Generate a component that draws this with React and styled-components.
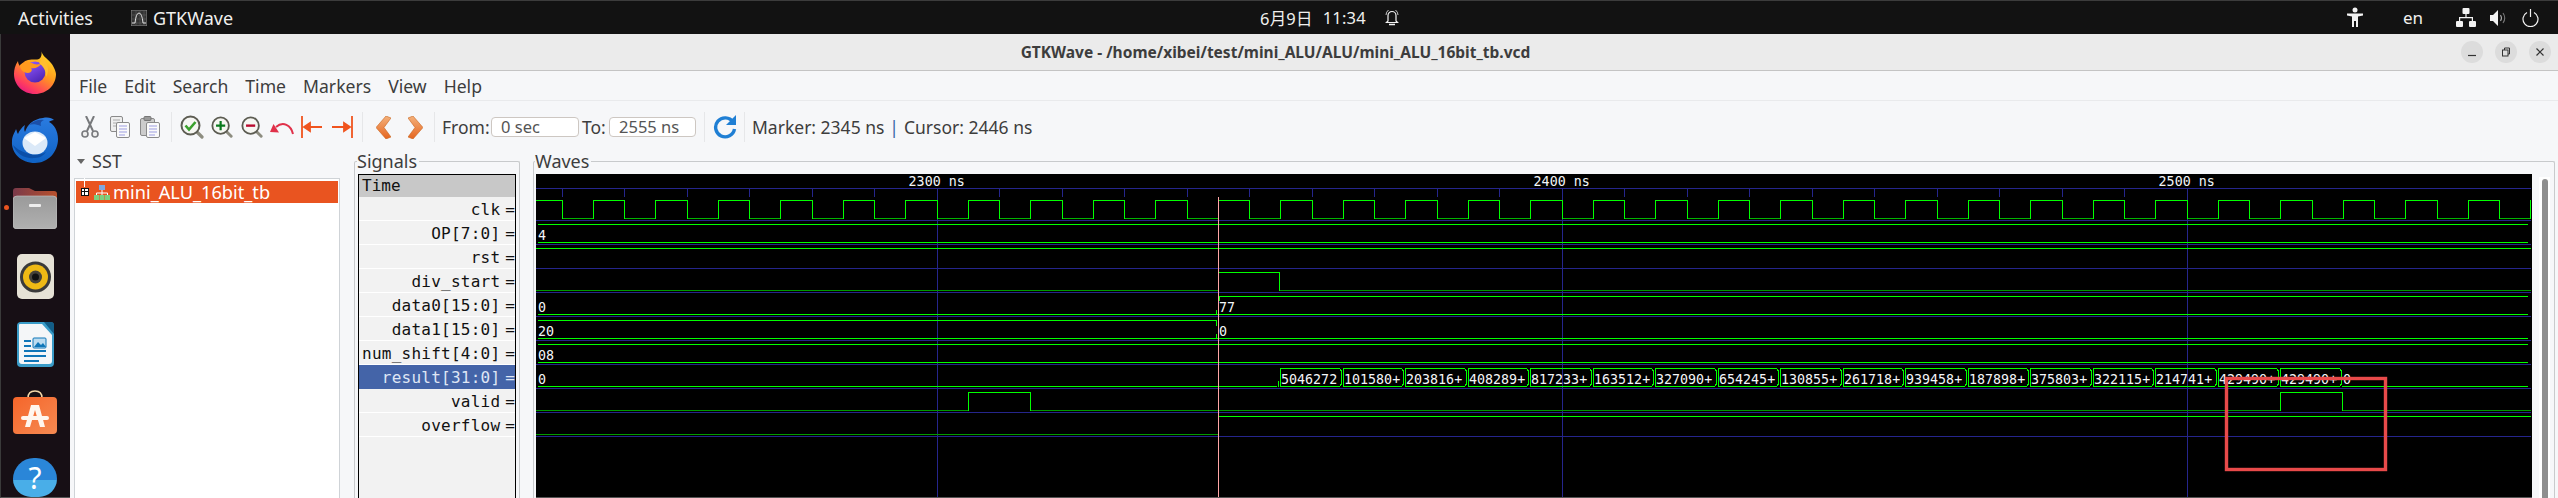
import React from "react";
import styled, { createGlobalStyle } from "styled-components";

const Global = createGlobalStyle`
  html, body { margin: 0; padding: 0; width: 2558px; height: 498px; overflow: hidden; background: #f6f7f9; }
  #root { width: 2558px; height: 498px; }
`;
const UI = `"Noto Sans", "Open Sans", sans-serif`;
const MONO = `"DejaVu Sans Mono", monospace`;

const Page = styled.div`
  display: grid; grid-template-columns: 70px 1fr; grid-template-rows: 34px 464px;
  width: 2558px; height: 498px; overflow: hidden; font-family: ${UI}; color: #3d3d3d;
`;
const TopBar = styled.header`
  grid-column: 1 / 3; display: flex; align-items: center; background: #121212;
  border-top: 1px solid #3c3c3c; box-sizing: border-box; color: #f0f0ee; font-size: 18px; padding-right: 19px;
`;
const TopLeft = styled.div`flex: 0 0 1260px; display: flex; align-items: center;`;
const Activities = styled.span`margin-left: 18px; width: 113px;`;
const AppName = styled.span`margin-left: 6px;`;
const Clock = styled.div`display: flex; align-items: center; font-family: ${UI}, "Noto Sans CJK SC"; font-size: 16.5px; letter-spacing: .2px;`;
const ClockTime = styled.span`margin-left: 10px; margin-right: 19px;`;
const TopRight = styled.div`margin-left: auto; display: flex; align-items: center;`;
const Lang = styled.span`margin: 0 33px 0 39px; width: 20px; font-size: 17px;`;
const TrayGap = styled.span`display: inline-block; width: ${p => p.$w}px;`;

const Dock = styled.nav`
  position: relative; background: #170f15; border-left: 1px solid #3a3a3a; border-bottom: 1px solid #555;
  box-sizing: border-box; display: flex; flex-direction: column; align-items: center; padding-top: 4px;
`;
const DockSlot = styled.div`flex: 0 0 68px; display: flex; align-items: center; justify-content: center; margin-right: 1px;`;
const LastSlot = styled.div`display: flex; justify-content: center; margin: 12px 1px 0 0;`;
const RunDot = styled.span`position: absolute; left: 3px; top: 171px; width: 5px; height: 5px; border-radius: 50%; background: #e95420;`;

const Win = styled.main`display: flex; flex-direction: column; background: #f6f7f9; min-width: 0; overflow: hidden;`;
const TitleBar = styled.div`
  flex: 0 0 37px; box-sizing: border-box; display: flex; align-items: center; background: #ebebeb;
  border-bottom: 1px solid #c4c4c4; padding: 0 7px 0 20px;
`;
const Title = styled.div`flex: 1; text-align: center; font-weight: 700; font-size: 15.5px; color: #3d3d3d;`;
const Controls = styled.div`display: flex; gap: 12px;`;
const WinBtn = styled.div`width: 22px; height: 22px; border-radius: 50%; background: #dcdcdc; display: flex; align-items: center; justify-content: center;`;
const MenuBar = styled.div`
  flex: 0 0 30px; box-sizing: border-box; display: flex; align-items: center; gap: 17px; padding-left: 9px;
  border-bottom: 1px solid #e9eaec; font-size: 17.6px;
`;
const Toolbar = styled.div`
  flex: 0 0 50px; box-sizing: border-box; display: flex; align-items: center; padding: 2px 0 0 5px; font-size: 17.5px;
`;
const ToolBtn = styled.div`flex: 0 0 ${p => p.$w || 30}px; display: flex; align-items: center; justify-content: center;`;
const ToolSep = styled.div`flex: 0 0 ${p => p.$w}px; height: 30px; display: flex; justify-content: center;
  &::after { content: ""; width: 1px; height: 30px; background: #e6e7e9; }`;
const Label = styled.span`flex: 0 0 ${p => p.$w}px; margin-left: ${p => p.$l || 0}px; white-space: nowrap;`;
const Entry = styled.div`
  box-sizing: border-box; flex: 0 0 ${p => p.$w}px; height: 20px; padding-left: 9px; line-height: 18px;
  background: #fff; border: 1px solid #cdc7c2; border-radius: 4px; color: #555; font-size: 16.5px;
`;
const Pipe = styled.span`flex: 0 0 10px; text-align: center; color: #3465a4; margin-right: 5px;`;

const Panes = styled.div`flex: 1; display: flex; min-height: 0;`;
const SstPane = styled.section`flex: 0 0 284px; box-sizing: border-box; padding-left: 4px;`;
const SstHead = styled.div`height: 27px; display: flex; align-items: center; font-size: 18px; padding: 0 0 7px 3px; box-sizing: border-box;`;
const Tri = styled.span`width: 0; height: 0; border: 4.5px solid transparent; border-top: 5px solid #666; border-bottom: 0; margin-right: 7px;`;
const Tree = styled.div`box-sizing: border-box; width: 266px; height: 330px; background: #fff; border: 1px solid #cfd3d7; padding: 2px 1px;`;
const TreeRow = styled.div`height: 22px; background: #e95420; color: #fff; display: flex; align-items: center; font-size: 18.2px; position: relative;`;
const Expander = styled.span`
  box-sizing: border-box; width: 8px; height: 8px; margin-left: 5px; background: #fff; border: 1px solid #111;
  position: relative;
  &::before { content: ""; position: absolute; left: 2px; top: 0; width: 1px; height: 6px; background: #111; }
  &::after { content: ""; position: absolute; left: 0; top: 2px; width: 6px; height: 1px; background: #111; }
`;
const TreeLine = styled.span`position: absolute; left: 8px; top: -3px; width: 1px; height: 9px; background: #fff;`;
const TreeName = styled.span`margin-left: 3px;`;

const Frame = styled.fieldset`
  margin: 0; padding: 3px ${p => p.$pr}px 0 ${p => p.$pl}px; min-width: 0; box-sizing: border-box; height: 360px;
  border: 1px solid #c8cacc; border-bottom: 0; border-radius: 2px; flex: 0 0 ${p => p.$w}px; margin-right: ${p => p.$mr}px;
`;
const Legend = styled.legend`padding: 0 2px 0 0; margin-left: -1px; height: 20px; line-height: 20px; font-size: 18px;`;
const SignalList = styled.div`box-sizing: border-box; width: 158px; height: 340px; border: 1px solid #000; border-bottom: 0; background: #f2f2f2; font-family: ${MONO}; font-size: 16px; color: #111;`;
const TimeRow = styled.div`height: 22px; background: #c8c8c8; line-height: 22px; padding-left: 3px;`;
const SigRow = styled.div`
  box-sizing: border-box; height: 24px; display: flex; justify-content: flex-end; align-items: center; padding: 2px 0 0;
  border-bottom: 1px solid ${p => p.$sel ? "#4464a8" : "#fff"};
  background: ${p => p.$sel ? "#4464a8" : "transparent"}; color: ${p => p.$sel ? "#dfe6f5" : "#111"};
`;
const SigName = styled.span`letter-spacing: .25px;`;
const SigEq = styled.span`margin-left: 5px;`;
const WaveArea = styled.div`display: flex; height: 330px;`;
const WaveSvg = styled.svg`display: block; flex: 0 0 1996px; height: 324px;`;
const ScrollTrack = styled.div`margin: 3px 0 0 7px; width: 11px; height: 330px; background: #fff; display: flex; justify-content: center;`;
const ScrollThumb = styled.div`width: 6px; height: 330px; margin-top: 2px; background: #8e8e8e; border-radius: 3px 3px 0 0;`;

/* ---------- waveform ---------- */
const G = "#00ff00", GD = "#009a00", B = "#25258c";
const L = 536, R = 2531;
const PX = t => 936.7 + (t - 2300) * 6.25;
const h = (x1, x2, y) => `M${Math.round(x1)} ${y + .5}H${Math.round(x2)}`;
const v = (x, y1, y2) => `M${Math.round(x) + .5} ${y1}V${y2}`;
const blue = [188, 220, 244, 268, 292, 316, 340, 364, 388, 412, 436];
const ticks = Array.from({ length: 27 }, (_, i) => 624.2 + 62.5 * (i - 1)).filter(x => x > L && x < R);
const majors = [2300, 2400, 2500];

let clkHi = "", clkLo = "", clkV = "";
for (let k = -7; k < 27; k++) {
  const fall = PX(2300 + k * 10), rise = fall + 31.25, nextFall = fall + 62.5;
  if (rise < R && nextFall > L) clkHi += h(Math.max(rise, L), Math.min(nextFall, R), 200);
  if (fall < R && rise > L) clkLo += h(Math.max(fall, L), Math.min(rise, R), 218);
  if (fall > L && fall < R) clkV += v(fall, 200, 219);
  if (rise > L && rise < R) clkV += v(rise, 200, 219);
}
const resultVals = ["5046272","101580+","203816+","408289+","817233+","163512+","327090+","654245+","130855+","261718+","939458+","187898+","375803+","322115+","214741+","429490+","429490+"];
const X0 = 1279, SEG = 62.5;
let segPath = "";
resultVals.forEach((_, i) => {
  const a = Math.round(X0 + i * SEG), b = Math.round(X0 + (i + 1) * SEG);
  segPath += `M${a + 1.5} 386.5V368.5H${b - 2.5}L${b - .5} 371V384L${b - 2.5} 386.5H${a + 1.5}`;
});
const bright = [
  h(538, 2528, 224), h(538, 2528, 242), h(L, R, 248),
  h(1218, 1279, 272), v(1279, 272, 291),
  h(1220, 2528, 296), v(1218.5, 296, 301), h(538, 2528, 314), v(1216, 310, 315),
  h(538, 1217, 320), v(1216, 320, 326), h(538, 2528, 338), v(1216, 334, 339),
  h(538, 2528, 344), h(538, 2528, 362), h(538, 1277, 386), h(2342, 2528, 386),
  v(1278, 381, 387), h(1218, R, 416),
  v(967.9, 392, 411), h(968, 1030, 392), v(1030.4, 392, 411),
  v(2279.8, 392, 411), h(2280, 2342, 392), v(2342.4, 392, 411),
].join("");
const dark = [h(L, 1218, 290), h(1279, R, 290), h(L, 968, 410), h(1030, 2280, 410), h(2342, R, 410), h(L, 1218, 434)].join("");

const Val = ({ x, y, children }) => <text x={x} y={y} fontFamily={MONO} fontSize="13.33" fill="#f4f6f8">{children}</text>;

const Waves = () => (
  <WaveSvg viewBox="536 174 1996 324">
    <rect x="536" y="174" width="1996" height="324" fill="#000" />
    <g fill="none" stroke={B} strokeWidth="1" shapeRendering="crispEdges">
      {blue.map(y => <path key={y} d={h(L, R, y)} />)}
      {ticks.map(x => <path key={x} d={v(x, 188, 197)} />)}
      {majors.map(t => <path key={t} d={v(PX(t), 188, 498)} />)}
    </g>
    <g fill="none" strokeWidth="1" shapeRendering="crispEdges">
      <path d={clkLo} stroke="#00b400" />
      <path d={clkHi + clkV} stroke={G} />
      <path d={dark} stroke={GD} />
      <path d={bright} stroke={G} />
      <path d={segPath} stroke={G} />
    </g>
    {majors.map(t => <text key={t} x={PX(t)} y="186" textAnchor="middle" fontFamily={MONO} fontSize="13.33" fill="#f4f6f8">{t} ns</text>)}
    <Val x="538" y="240">4</Val>
    <Val x="538" y="312">0</Val>
    <Val x="1219" y="312">77</Val>
    <Val x="538" y="336">20</Val>
    <Val x="1219" y="336">0</Val>
    <Val x="538" y="360">08</Val>
    <Val x="538" y="384">0</Val>
    {resultVals.map((r, i) => <Val key={i} x={Math.round(X0 + i * SEG) + 2} y="384">{r}</Val>)}
    <Val x="2343" y="384">0</Val>
    <path d="M1218.5 197V498" stroke="#ffa6a6" strokeWidth="1" shapeRendering="crispEdges" />
    <rect x="2226.5" y="378.5" width="159" height="91" fill="none" stroke="#e84a4a" strokeWidth="3.4" />
    <path d="M536 497.5H2532" stroke="#555" />
  </WaveSvg>
);

/* ---------- icons ---------- */
const Firefox = () => (
  <svg width="42" height="44" viewBox="0 0 42 44">
    <defs>
      <linearGradient id="ff1" x1="0.8" y1="0" x2="0.2" y2="1"><stop offset="0" stopColor="#ffe226" /><stop offset=".45" stopColor="#ff9a1e" /><stop offset=".8" stopColor="#ff3d5e" /><stop offset="1" stopColor="#e31587" /></linearGradient>
      <linearGradient id="ff2" x1="0.2" y1="0" x2="0.8" y2="1"><stop offset="0" stopColor="#9059ff" /><stop offset="1" stopColor="#4b22b0" /></linearGradient>
    </defs>
    <path d="M27 0c1 6 6 8 10 13 4 5 5 10 5 11 0 11-9 20-21 20S0 35 0 24c0-4 1-9 4-13 0 2 1 4 2 5 1-2 4-5 8-6 5-1 9 0 11-1 3-2 3-6 2-9z" fill="url(#ff1)" />
    <circle cx="21" cy="22" r="10.5" fill="url(#ff2)" />
    <path d="M6 15c4-3 10-3 14-1 3 1 6 0 7 0-2 3-6 5-10 4 2 2 0 5-3 5C9 23 6 19 6 15z" fill="#ff9a1e" />
    <path d="M27 6c4 3 7 8 7 14 0 3-1 5-2 7 0-7-3-11-7-14 2-2 3-4 2-7z" fill="#ffbd2e" />
  </svg>
);
const Thunderbird = () => (
  <svg width="48" height="46" viewBox="0 0 48 46">
    <defs><linearGradient id="tb" x1="0" y1="0" x2="0" y2="1"><stop offset="0" stopColor="#2a7be0" /><stop offset="1" stopColor="#0f62c4" /></linearGradient></defs>
    <path d="M24 46C10 46 0 36 1 24c0-5 3-9 4-12 1 2 1 4 2 5 1-3 4-7 7-9-1 3-1 5 0 7 2-7 8-13 18-14 5-1 9 0 11 2-2 0-4 1-5 2 5 2 9 9 9 17 0 13-10 24-23 24z" fill="url(#tb)" />
    <path d="M18 8c4-4 10-6 15-5-3 1-4 3-3 6-5-2-9-2-12-1z" fill="#1b4fa8" />
    <ellipse cx="24" cy="26" rx="12.5" ry="11.5" fill="#dbe9f8" />
    <path d="M13 21l11-6 11 6-11 8z" fill="#fff" />
    <path d="M2 28c3 9 12 14 22 13 5 0 9-3 11-6-5 3-13 4-20 1C9 34 5 31 2 28z" fill="#0b4fa8" />
  </svg>
);
const Files = () => (
  <svg width="44" height="41" viewBox="0 0 44 41">
    <defs>
      <linearGradient id="fa" x1="0" y1="0" x2="1" y2="0"><stop offset="0" stopColor="#7a3a4a" /><stop offset="1" stopColor="#b8502c" /></linearGradient>
      <linearGradient id="fb" x1="0" y1="0" x2="0" y2="1"><stop offset="0" stopColor="#9a9a9a" /><stop offset="1" stopColor="#b0b0b0" /></linearGradient>
    </defs>
    <path d="M0 12V3q0-3 3-3h13l6 3h19q3 0 3 3v8z" fill="url(#fa)" />
    <rect x="0" y="8" width="44" height="33" rx="4" fill="url(#fb)" stroke="#c9c9c9" strokeWidth=".6" />
    <rect x="16" y="16" width="12" height="3" rx="1" fill="#eee" />
  </svg>
);
const Rhythm = () => (
  <svg width="37" height="45" viewBox="0 0 37 45">
    <rect width="37" height="45" rx="5" fill="#e6e2d6" />
    <circle cx="18.5" cy="23" r="15.5" fill="#3a3a3a" />
    <circle cx="18.5" cy="23" r="12.5" fill="#eeb915" />
    <circle cx="18.5" cy="23" r="6.5" fill="#46423a" />
    <circle cx="18.5" cy="23" r="3.5" fill="#111" />
  </svg>
);
const Writer = () => (
  <svg width="37" height="45" viewBox="0 0 37 45">
    <rect width="37" height="45" rx="4" fill="#3a9cc8" />
    <path d="M2 3q0-1 1-1h22l10 11v26q0 3-3 3H5q-3 0-3-3z" fill="#f4f6f8" />
    <path d="M27 0h7q3 0 3 3v9z" fill="#135d86" />
    <path d="M7 18h7v2H7zM7 23h7v2H7zM7 28h22v2H7zM7 33h22v2H7zM7 38h15v2H7z" fill="#0f76b8" />
    <rect x="16" y="16" width="13" height="10" rx="1" fill="#bcdcf0" stroke="#0f76b8" />
    <path d="M17 25l4-5 3 3 2-2 3 4z" fill="#0f76b8" />
  </svg>
);
const Software = () => (
  <svg width="44" height="44" viewBox="0 0 44 44">
    <defs><linearGradient id="sw" x1="0" y1="0" x2="1" y2="1"><stop offset="0" stopColor="#f5652a" /><stop offset="1" stopColor="#f58a52" /></linearGradient></defs>
    <path d="M15 8q0-7 7-7t7 7" fill="none" stroke="#f2d6a8" strokeWidth="1.6" />
    <rect y="7" width="44" height="37" rx="4" fill="url(#sw)" />
    <path d="M18 15h8l6 22h-5l-5-17-5 17h-5z" fill="#fff6ee" />
    <rect x="8" y="26" width="28" height="4" rx="2" fill="#fff6ee" />
  </svg>
);
const HelpIcon = styled.div`
  width: 44px; height: 39px; border-radius: 22px 22px 19px 19px; background: linear-gradient(#2a86d8 56%, #49aee8 56%);
  color: #fff; font-size: 30px; line-height: 39px; text-align: center; font-family: ${UI};
`;
const AppGlyph = () => (
  <svg width="16" height="16" viewBox="0 0 16 16">
    <rect width="16" height="16" fill="#333" stroke="#888" />
    <path d="M1 5h14M1 9h14M1 13h14M5 1v14M9 1v14M13 1v14" stroke="#666" strokeWidth=".5" />
    <path d="M1 13h3q1-10 4-10t4 10h3" fill="none" stroke="#ddd" />
  </svg>
);
const Bell = () => (
  <svg width="14" height="17" viewBox="0 0 14 17" fill="none" stroke="#f2f2f2" strokeWidth="1.2">
    <path d="M3 12V6.5a4 4 0 0 1 8 0V12l1.5 1.5h-11z" />
    <path d="M1 6q0-3 2.5-5M13 6q0-3-2.500-5" strokeWidth=".8" />
    <path d="M4 15.500h6" strokeWidth="1.500" />
  </svg>
);
const Person = () => (
  <svg width="18" height="22" viewBox="0 0 18 22" fill="#f2f2f2">
    <circle cx="9" cy="3" r="2.500" />
    <path d="M1 6.500h16v2l-5 1V20h-2v-6H8v6H6V9.500l-5-1z" />
  </svg>
);
const Net = () => (
  <svg width="20" height="20" viewBox="0 0 20 20" fill="#f2f2f2">
    <rect x="6.500" y="0" width="7" height="6" rx="1" />
    <rect x="0" y="13" width="7" height="6" rx="1" />
    <rect x="13" y="13" width="7" height="6" rx="1" />
    <path d="M9.400 6h1.200v3H17v4h-1.200v-2.800H4.200V13H3V9h6.400z" />
  </svg>
);
const Speaker = () => (
  <svg width="18" height="18" viewBox="0 0 18 18" fill="none">
    <path d="M0 6h3l5-5v16l-5-5H0z" fill="#f2f2f2" />
    <path d="M10.500 6q2 3 0 6" stroke="#aaa" strokeWidth="1.100" />
    <path d="M13 4q3.500 5 0 10" stroke="#777" strokeWidth="1.100" />
  </svg>
);
const Power = () => (
  <svg width="17" height="18" viewBox="0 0 17 18" fill="none" stroke="#f2f2f2" strokeWidth="1.200">
    <path d="M5 3.500a7.500 7.500 0 1 0 7 0" />
    <path d="M8.500 0v8" />
  </svg>
);
const Magnifier = ({ children, size = 22 }) => (
  <svg width={size} height={size} viewBox="0 0 24 24" fill="none">
    <path d="M16 16l6 6" stroke="#8d8d80" strokeWidth="3.200" strokeLinecap="round" />
    <circle cx="10.500" cy="10.500" r="9" fill="#f6f6f2" stroke="#5c5c52" strokeWidth="2" />
    {children}
  </svg>
);
const Cut = () => (
  <svg width="18" height="22" viewBox="0 0 18 22" fill="none" stroke="#77797c">
    <path d="M5 0l7 15M13 0L6 15" strokeWidth="2" />
    <circle cx="4" cy="18" r="3" strokeWidth="1.600" fill="#eee" />
    <circle cx="14" cy="18" r="3" strokeWidth="1.600" fill="#eee" />
  </svg>
);
const Copy = () => (
  <svg width="20" height="22" viewBox="0 0 20 22">
    <rect x=".5" y=".5" width="12" height="15" rx="1.500" fill="#eee" stroke="#8a8a8a" />
    <path d="M3 4h7M3 7h7M3 10h7" stroke="#aaa" />
    <rect x="6.500" y="6.500" width="13" height="15" rx="1.500" fill="#fafafa" stroke="#8a8a8a" />
    <path d="M9 10h8M9 13h8M9 16h8M9 19h6" stroke="#9d9de0" />
  </svg>
);
const Paste = () => (
  <svg width="20" height="22" viewBox="0 0 20 22">
    <rect x=".5" y="2.500" width="14" height="17" rx="1.500" fill="#ccc" stroke="#8a8a8a" />
    <rect x="4" y=".5" width="7" height="4" rx="1" fill="#999" stroke="#777" />
    <rect x="6.500" y="6.500" width="13" height="15" rx="1.500" fill="#fafafa" stroke="#8a8a8a" />
    <path d="M9 10h8M9 13h8M9 16h8M9 19h6" stroke="#9d9de0" />
  </svg>
);
const Undo = () => (
  <svg width="24" height="15" viewBox="0 0 24 15" fill="none">
    <path d="M23 14C21 5 13 1 6 7" stroke="#e0314a" strokeWidth="2" />
    <path d="M0 12l9 .5L3.500 4z" fill="#e0314a" />
  </svg>
);
const StopArrow = ({ dir }) => (
  <svg width="22" height="22" viewBox="0 0 22 22">
    {dir === "l"
      ? <path d="M1 0v22M3 11h18M3 11l6-4v8z" stroke="#f0541e" strokeWidth="1.800" fill="#f0541e" />
      : <path d="M21 0v22M1 11h18M19 11l-6-4v8z" stroke="#f0541e" strokeWidth="1.800" fill="#f0541e" />}
  </svg>
);
const Chevron = ({ dir }) => (
  <svg width="15" height="23" viewBox="0 0 15 23">
    <defs><linearGradient id={"ch" + dir} x1="0" y1="0" x2="0" y2="1"><stop offset="0" stopColor="#f4b27c" /><stop offset="1" stopColor="#e5641e" /></linearGradient></defs>
    <path d={dir === "l" ? "M10 0l5 2-7 9.500 7 9.500-5 2L0 11.500z" : "M5 0L0 2l7 9.500L0 21l5 2 10-11.500z"} fill={`url(#ch${dir})`} stroke="#c8641e" strokeWidth=".6" />
  </svg>
);
const Reload = () => (
  <svg width="24" height="24" viewBox="0 0 24 24" fill="none">
    <path d="M20 7A9.500 9.500 0 1 0 21.500 14" stroke="#1f7fd4" strokeWidth="3.400" />
    <path d="M23 0v10H13z" fill="#1f7fd4" />
  </svg>
);
const Hier = () => (
  <svg width="16" height="15" viewBox="0 0 16 15" style={{ marginLeft: 5 }}>
    <rect x="5" y="0" width="6" height="5" fill="#7fa8e0" />
    <path d="M8 5v3M2.500 10V8h11v2M8 8v2" stroke="#fff" fill="none" />
    <rect x="0" y="10" width="5" height="5" fill="#7ed07e" />
    <rect x="5.500" y="10" width="5" height="5" fill="#7ed07e" />
    <rect x="11" y="10" width="5" height="5" fill="#7ed07e" />
  </svg>
);

const signals = ["clk", "OP[7:0]", "rst", "div_start", "data0[15:0]", "data1[15:0]", "num_shift[4:0]", "result[31:0]", "valid", "overflow"];
const menus = ["File", "Edit", "Search", "Time", "Markers", "View", "Help"];

export default function App() {
  return (
    <Page>
      <Global />
      <TopBar>
        <TopLeft>
          <Activities>Activities</Activities>
          <AppGlyph />
          <AppName>GTKWave</AppName>
        </TopLeft>
        <Clock>
          <span>6月9日</span>
          <ClockTime>11:34</ClockTime>
          <Bell />
        </Clock>
        <TopRight>
          <Person />
          <Lang>en</Lang>
          <Net />
          <TrayGap $w={14} />
          <Speaker />
          <TrayGap $w={14} />
          <Power />
        </TopRight>
      </TopBar>
      <Dock>
        <RunDot />
        <DockSlot><Firefox /></DockSlot>
        <DockSlot><Thunderbird /></DockSlot>
        <DockSlot><Files /></DockSlot>
        <DockSlot><Rhythm /></DockSlot>
        <DockSlot><Writer /></DockSlot>
        <DockSlot><Software /></DockSlot>
        <LastSlot><HelpIcon>?</HelpIcon></LastSlot>
      </Dock>
      <Win>
        <TitleBar>
          <Title>GTKWave - /home/xibei/test/mini_ALU/ALU/mini_ALU_16bit_tb.vcd</Title>
          <Controls>
            <WinBtn><svg width="10" height="10" viewBox="0 0 10 10"><path d="M1 8.500h8" stroke="#333" strokeWidth="1.200" /></svg></WinBtn>
            <WinBtn><svg width="10" height="10" viewBox="0 0 10 10" fill="none" stroke="#333"><rect x="1.500" y="3" width="5.500" height="6" /><path d="M3.500 3V1h5v6H7" /></svg></WinBtn>
            <WinBtn><svg width="10" height="10" viewBox="0 0 10 10"><path d="M1.500 1.500l7 7M8.500 1.500l-7 7" stroke="#333" strokeWidth="1.200" /></svg></WinBtn>
          </Controls>
        </TitleBar>
        <MenuBar>{menus.map(m => <span key={m}>{m}</span>)}</MenuBar>
        <Toolbar>
          <ToolBtn><Cut /></ToolBtn>
          <ToolBtn><Copy /></ToolBtn>
          <ToolBtn><Paste /></ToolBtn>
          <ToolSep $w={12} />
          <ToolBtn><Magnifier size={24}><path d="M5.500 10.500l3.500 4 6.500-7.500" stroke="#3aa02c" strokeWidth="2.600" /></Magnifier></ToolBtn>
          <ToolBtn><Magnifier><path d="M10.500 5.500v10M5.500 10.500h10" stroke="#0a7a1e" strokeWidth="2.400" /></Magnifier></ToolBtn>
          <ToolBtn><Magnifier><path d="M5.500 10.500h10" stroke="#b80a2e" strokeWidth="2.600" /></Magnifier></ToolBtn>
          <ToolBtn><Undo /></ToolBtn>
          <ToolBtn><StopArrow dir="l" /></ToolBtn>
          <ToolBtn><StopArrow dir="r" /></ToolBtn>
          <ToolSep $w={10} />
          <ToolBtn $w={32}><Chevron dir="l" /></ToolBtn>
          <ToolBtn $w={32}><Chevron dir="r" /></ToolBtn>
          <ToolSep $w={7} />
          <Label $l={4} $w={49}>From:</Label>
          <Entry $w={88}>0 sec</Entry>
          <Label $l={3} $w={27}>To:</Label>
          <Entry $w={87}>2555 ns</Entry>
          <ToolSep $w={17} />
          <ToolBtn $w={24}><Reload /></ToolBtn>
          <ToolSep $w={15} />
          <Label $w={137}>Marker: 2345 ns</Label>
          <Pipe>|</Pipe>
          <Label $w={140}>Cursor: 2446 ns</Label>
        </Toolbar>
        <Panes>
          <SstPane>
            <SstHead><Tri />SST</SstHead>
            <Tree>
              <TreeRow><TreeLine /><Expander /><Hier /><TreeName>mini_ALU_16bit_tb</TreeName></TreeRow>
            </Tree>
          </SstPane>
          <Frame $w={166} $mr={13} $pl={3} $pr={3}>
            <Legend>Signals</Legend>
            <SignalList>
              <TimeRow>Time</TimeRow>
              {signals.map(s => (
                <SigRow key={s} $sel={s.startsWith("result")}><SigName>{s}</SigName><SigEq>=</SigEq></SigRow>
              ))}
            </SignalList>
          </Frame>
          <Frame $w={2022} $mr={0} $pl={2} $pr={2}>
            <Legend>Waves</Legend>
            <WaveArea>
              <Waves />
              <ScrollTrack><ScrollThumb /></ScrollTrack>
            </WaveArea>
          </Frame>
        </Panes>
      </Win>
    </Page>
  );
}
